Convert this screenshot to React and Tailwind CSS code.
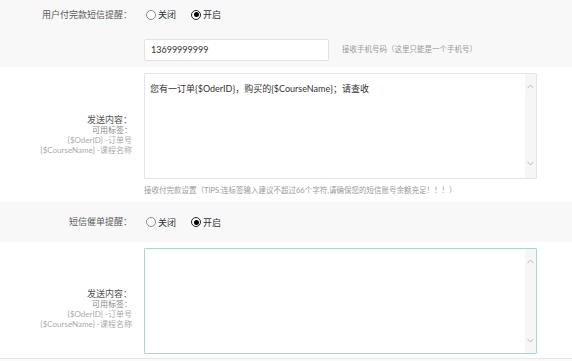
import React from "react";

const FONT = { fontFamily: 'Lato, "Noto Sans CJK SC", sans-serif' };

function Radio({ checked, label }) {
  return (
    <label className="flex items-center gap-[2px]">
      {checked ? (
        <span className="w-[10px] h-[10px] rounded-full border border-[#222] flex items-center justify-center bg-white">
          <span className="w-[5px] h-[5px] rounded-full bg-black" />
        </span>
      ) : (
        <span className="w-[10px] h-[10px] rounded-full border border-[#8a8a8a] bg-white" />
      )}
      <span className="text-[9px] text-[#333] leading-none">{label}</span>
    </label>
  );
}

function Chevron({ up }) {
  return (
    <svg width="7" height="5" viewBox="0 0 7 5" className="block">
      <path
        d={up ? "M0.5 4.2 L3.5 1 L6.5 4.2" : "M0.5 0.8 L3.5 4 L6.5 0.8"}
        fill="none"
        stroke="#b5b5b5"
        strokeWidth="0.9"
      />
    </svg>
  );
}

function FakeTextarea({ focused, children, upTop, downBottom }) {
  return (
    <div
      className={
        "w-[393px] h-[106px] bg-white flex rounded-[1px] border " +
        (focused ? "border-[#a7d7d5]" : "border-[#e4e4e4]")
      }
    >
      <div className="flex-1 px-[5px] pt-[9px] text-[9px] text-[#333] leading-[12px]">
        {children}
      </div>
      <div className="w-[11px] bg-[#f6f6f6] flex flex-col items-center justify-between" style={{ paddingTop: upTop, paddingBottom: downBottom }}>
        <Chevron up />
        <Chevron />
      </div>
    </div>
  );
}

function TagLabels() {
  return (
    <div className="w-[144px] pr-[12px] flex flex-col items-end text-right leading-[10px]">
      <span className="text-[9px] text-[#555]">发送内容：</span>
      <span className="text-[8px] text-[#888]">可用标签：</span>
      <span className="text-[8px] text-[#aaa]">{"{$OderID} -订单号"}</span>
      <span className="text-[8px] text-[#aaa]">{"{$CourseName} -课程名称"}</span>
    </div>
  );
}

export default function App() {
  return (
    <div className="w-[572px] h-[361px] bg-white overflow-hidden" style={FONT}>
      {/* Section 1 */}
      <div className="bg-[#f8f8f8] pb-[6px]">
        <div className="h-[29px] flex items-center">
          <div className="w-[144px] pr-[12px] text-right text-[9px] text-[#5a5a5a]">用户付完款短信提醒：</div>
          <div className="flex items-center gap-[15px] pl-[2px]">
            <Radio label="关闭" />
            <Radio checked label="开启" />
          </div>
        </div>
        <div className="flex items-center mt-[10px]">
          <div className="w-[144px]" />
          <div className="w-[185px] h-[22px] bg-white border border-[#e2e2e2] rounded-[2px] flex items-center px-[6px] text-[9px] text-[#333]">
            13699999999
          </div>
          <div className="ml-[13px] text-[7.5px] text-[#9a9a9a]">接收手机号码（这里只能是一个手机号）</div>
        </div>
      </div>

      {/* Section 2 */}
      <div className="pt-[6px] h-[135px]">
        <div className="flex">
          <div className="pt-[42px]">
            <TagLabels />
          </div>
          <div>
            <FakeTextarea upTop="10px" downBottom="12px">
              {"您有一订单{$OderID}，购买的{$CourseName}；请查收"}
            </FakeTextarea>
            <div className="mt-[7px] text-[7.5px] text-[#9a9a9a] leading-[10px]">
              接收付完款设置（TIPS:连标签输入建议不超过66个字符,请确保您的短信账号余额充足！！！）
            </div>
          </div>
        </div>
      </div>

      {/* Section 3 */}
      <div className="bg-[#f8f8f8] h-[40px] flex items-center">
        <div className="w-[144px] pr-[12px] text-right text-[9px] text-[#5a5a5a]">短信催单提醒：</div>
        <div className="flex items-center gap-[15px] pl-[2px]">
          <Radio label="关闭" />
          <Radio checked label="开启" />
        </div>
      </div>

      {/* Section 4 */}
      <div className="pt-[6px] pb-[4px] border-b border-[#e6e6e6]">
        <div className="flex">
          <div className="pt-[41px]">
            <TagLabels />
          </div>
          <FakeTextarea focused upTop="10px" downBottom="10px" />
        </div>
      </div>
      <div className="bg-[#fafafa] h-[2px]" />
    </div>
  );
}
